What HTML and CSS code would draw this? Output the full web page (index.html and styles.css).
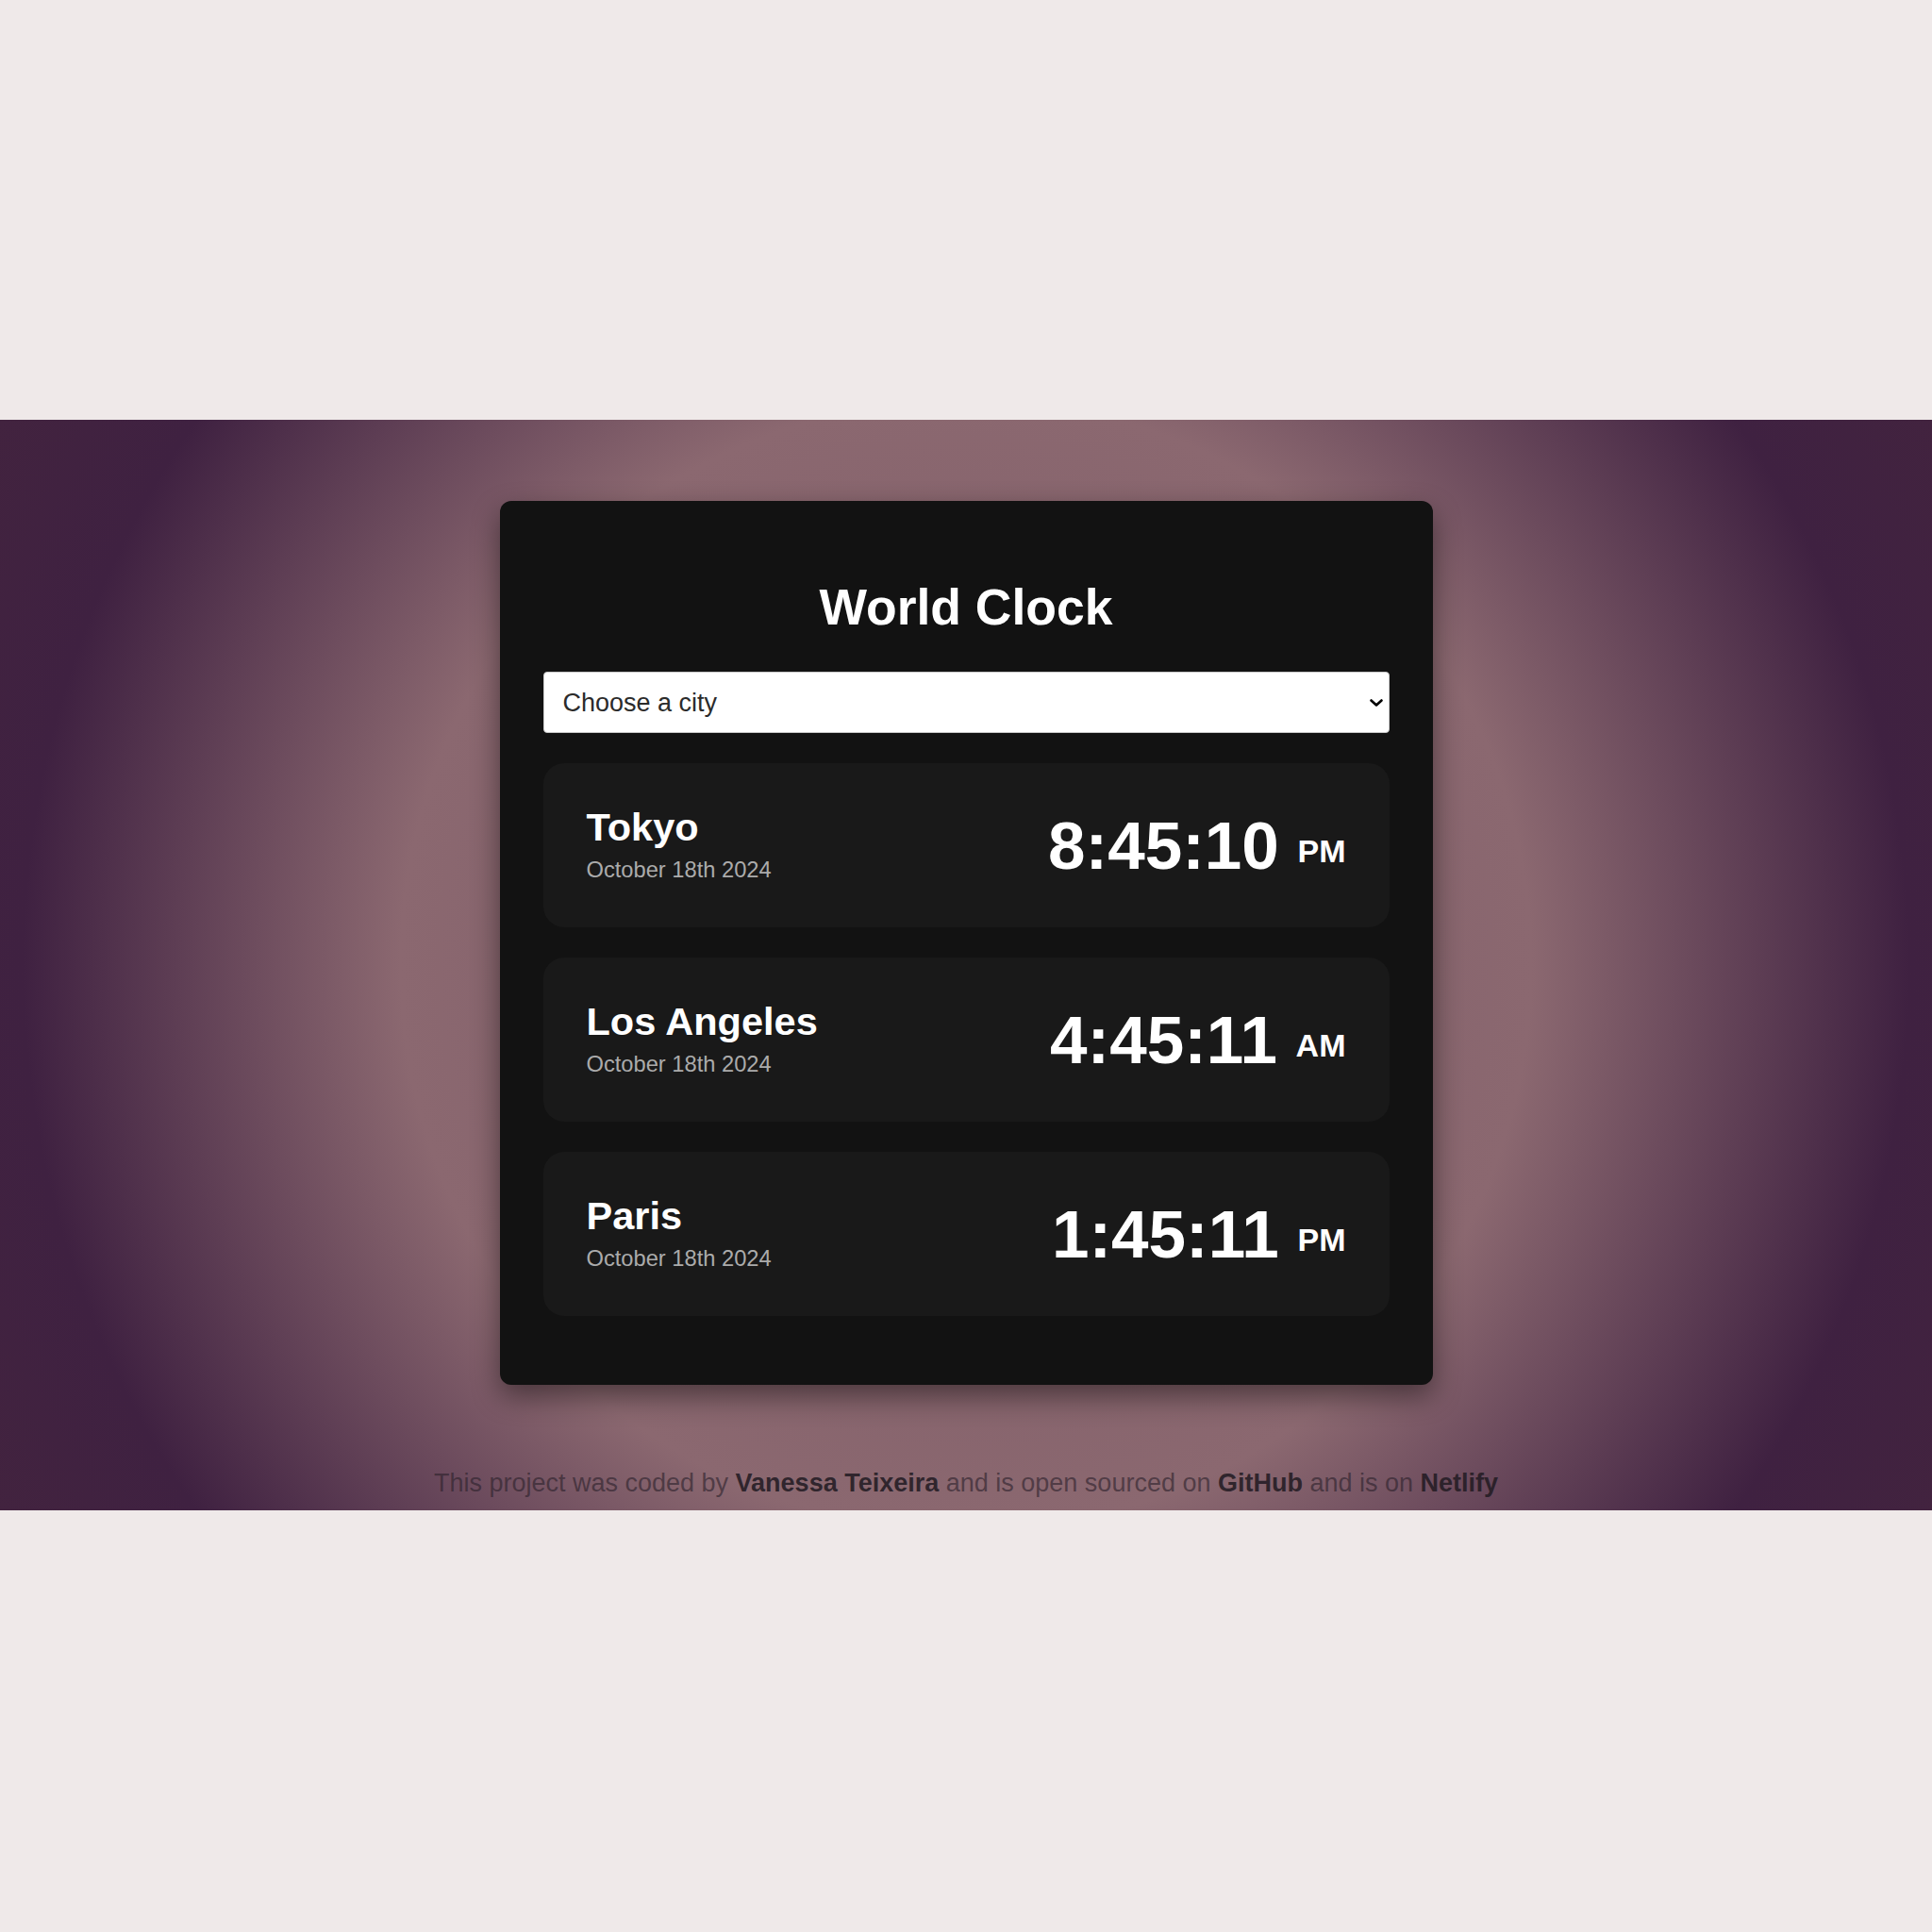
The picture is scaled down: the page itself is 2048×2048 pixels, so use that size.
FILE: index.html
```html
<!DOCTYPE html>
<html lang="en">
<head>
<meta charset="utf-8">
<title>World Clock</title>
<link rel="stylesheet" href="styles.css">
</head>
<body>
<main class="band">
  <section class="card">
    <h1 class="title">World Clock</h1>
    <div class="select-wrap">
      <select class="city-select">
        <option>Choose a city</option>
        <option>Tokyo</option>
        <option>Los Angeles</option>
        <option>Paris</option>
      </select>
      <svg class="chevron" viewBox="0 0 14 8" width="14" height="8" aria-hidden="true">
        <path d="M1.5 1.5 L7 6.5 L12.5 1.5" fill="none" stroke="#000" stroke-width="2.6" stroke-linecap="round" stroke-linejoin="round"/>
      </svg>
    </div>
    <div class="cities">
      <div class="city">
        <div class="city-info">
          <h2 class="city-name">Tokyo</h2>
          <div class="city-date">October 18th 2024</div>
        </div>
        <div class="city-time">8:45:10 <small class="ampm">PM</small></div>
      </div>
      <div class="city">
        <div class="city-info">
          <h2 class="city-name">Los Angeles</h2>
          <div class="city-date">October 18th 2024</div>
        </div>
        <div class="city-time">4:45:11 <small class="ampm">AM</small></div>
      </div>
      <div class="city">
        <div class="city-info">
          <h2 class="city-name">Paris</h2>
          <div class="city-date">October 18th 2024</div>
        </div>
        <div class="city-time">1:45:11 <small class="ampm">PM</small></div>
      </div>
    </div>
  </section>
  <footer class="footer">This project was coded by <a class="footer-link">Vanessa Teixeira</a> and is open sourced on <a class="footer-link">GitHub</a> and is on <a class="footer-link">Netlify</a></footer>
</main>
</body>
</html>
```

FILE: styles.css
```css
html, body {
  margin: 0;
  padding: 0;
}

body {
  background: #efe9e9;
  font-family: "Liberation Sans", Arial, sans-serif;
  height: 2048px;
}

.band {
  margin-top: 445px;
  height: 1156px;
  box-sizing: border-box;
  padding-top: 86px;
  display: flex;
  flex-direction: column;
  align-items: center;
  background: radial-gradient(circle at 50% 50%, #7c5a65 0%, #8b6870 51%, #3f2141 85%, #42233f 100%);
}

.card {
  width: 989px;
  box-sizing: border-box;
  padding: 82px 46px 73px;
  background: #121212;
  border-radius: 12px;
  box-shadow: 0 12px 30px rgba(0, 0, 0, 0.45);
}

.title {
  margin: 0;
  font-size: 53.5px;
  line-height: 61px;
  font-weight: 700;
  color: #ffffff;
  text-align: center;
}

.select-wrap {
  position: relative;
  margin-top: 38px;
}

.city-select {
  display: block;
  width: 100%;
  height: 65px;
  box-sizing: border-box;
  -webkit-appearance: none;
  appearance: none;
  border: 1px solid #c9c9c9;
  border-radius: 4px;
  background: #ffffff;
  padding: 0 19px 0 20px;
  font-family: "Liberation Sans", Arial, sans-serif;
  font-size: 27px;
  color: #2b2b2b;
  outline: none;
}

.chevron {
  position: absolute;
  right: 7px;
  top: 50%;
  transform: translateY(-50%);
  pointer-events: none;
}

.cities {
  margin-top: 32px;
  display: flex;
  flex-direction: column;
  gap: 32px;
}

.city {
  height: 174px;
  box-sizing: border-box;
  padding: 0 46px;
  background: #191919;
  border-radius: 22px;
  display: flex;
  justify-content: space-between;
  align-items: center;
}

.city-info {
  padding-bottom: 4px;
}

.city-name {
  margin: 0;
  font-size: 41.5px;
  font-weight: 700;
  color: #ffffff;
}

.city-date {
  margin-top: 8px;
  font-size: 23.7px;
  color: #ababab;
}

.city-time {
  font-size: 71px;
  font-weight: 700;
  color: #ffffff;
  white-space: nowrap;
}

.ampm {
  font-size: 34px;
  vertical-align: middle;
}

.footer {
  margin-top: 89px;
  font-size: 27px;
  color: rgba(42, 32, 42, 0.62);
  white-space: nowrap;
}

.footer-link {
  font-weight: 700;
  color: rgba(36, 28, 36, 0.9);
}
```
